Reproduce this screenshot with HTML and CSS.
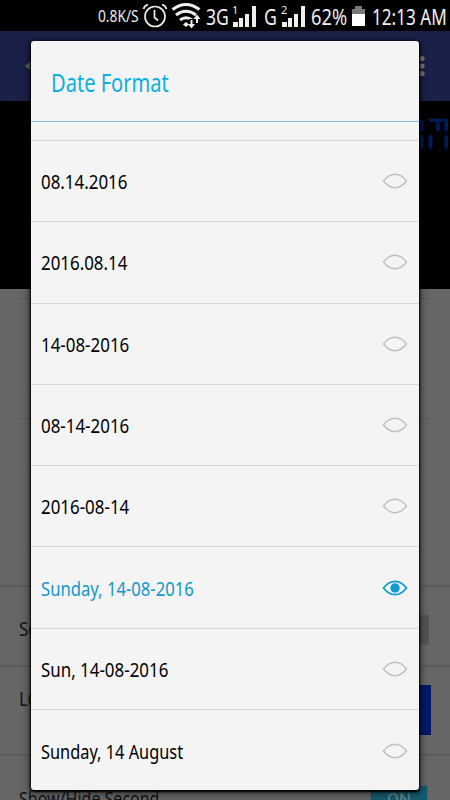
FILE: index.html
```html
<!DOCTYPE html>
<html lang="en">
<head>
<meta charset="utf-8">
<title>Date Format</title>
<link rel="stylesheet" href="styles.css">
</head>
<body>
<div class="screen">
  <header class="status">
    <span class="speed"><span class="t">0.8K/S</span></span>
    <svg class="alarm" width="26" height="27" viewBox="0 0 26 27" fill="none" stroke="#eee" stroke-width="1.7"><circle cx="13" cy="14.500" r="10"/><path d="M12.500 8v7.500l3.500 3M1.500 7q1-3.500 4.500-4.500M24.500 7q-1-3.500-4.500-4.500"/></svg>
    <svg class="wifi" width="30" height="27" viewBox="0 0 30 27" fill="none" stroke="#eee" stroke-width="3"><path d="M1.500 7.500Q15-2.500 28.500 7.500M5 13q10-7.500 20 0M9 18q6-4.500 12 0"/><path d="M12 22.500l3-2.500 3 2.500-3 2.500z" fill="#eee" stroke="none"/><path d="M20.500 17v8M26 22v-8" stroke="#000" stroke-width="5"/><path d="M20.500 18v5M26 16v5" stroke-width="2"/><path d="M17 22h7l-3.500 4.500zM22.500 17h7L26 12.500z" fill="#eee" stroke="none"/></svg>
    <span class="net g3"><span class="t">3G</span></span>
    <svg class="signal" width="26" height="26" viewBox="0 -2 26 26"><path d="M1 17h5v5H1zM7 13h4v9H7zM13 9h4v13h-4zM20 1h4v21h-4z" fill="#eee"/><text x="0" y="9">1</text></svg>
    <span class="net g1"><span class="t">G</span></span>
    <svg class="signal" width="26" height="26" viewBox="0 -2 26 26"><path d="M1 17h5v5H1zM7 13h4v9H7zM13 9h4v13h-4zM20 1h4v21h-4z" fill="#eee"/><text x="0" y="9">2</text></svg>
    <span class="net pct"><span class="t">62%</span></span>
    <svg class="battery" width="13" height="20" viewBox="0 0 13 20"><path d="M0 3h3V0h7v3h3v5H0z" fill="#777"/><path d="M0 8h13v12H0z" fill="#fff"/></svg>
    <span class="net clock"><span class="t">12:13 AM</span></span>
  </header>
  <div class="appbar">
    <svg width="12" height="14" viewBox="0 0 12 14"><path d="M0 7l7-6v12z" fill="#666"/></svg>
    <svg width="6" height="22" viewBox="0 0 6 22" fill="#777"><circle cx="3" cy="3.500" r="2.600"/><circle cx="3" cy="11" r="2.600"/><circle cx="3" cy="18.500" r="2.600"/></svg>
  </div>
  <div class="preview">
    <svg width="34" height="34" viewBox="0 0 34 34" fill="#001a5c"><path d="M5.500 1.500l2 1.500 1 2v8l-2 2.500-1.500-2zM5.500 18.500l1.500-1 1.500 2v10l-1.500 3.500-1.500-2zM15.500 17.500l2 2v10l-2 3.500-2-3v-10zM13.500 4l1-2.500h14l1 1-2.500 2.500h-10zM21 5.500h4v7l-2 3-2-3zM29.500 3l2-2 1.500 2v10l-1.500 2.500-2-2.500zM29.500 19.500l2-2 1.500 2v10l-1.500 3.500-2-3z"/></svg>
  </div>
  <main class="settings">
    <div class="blank first"></div>
    <div class="blank second"></div>
    <div class="setting seconds"><span class="t">Set Seconds</span><i class="off"></i></div>
    <div class="setting color"><span class="t">LCD Color</span><i class="swatch"></i></div>
    <div class="setting show"><span class="t">Show/Hide Second</span><span class="toggle"><span class="on">ON</span></span></div>
  </main>
  <section class="dialog">
    <h1><span class="t">Date Format</span></h1>
    <ul>
      <li class="stub"></li>
      <li><span class="t">08.14.2016</span><svg class="eye" viewBox="0 0 26 16"><path d="M1.500 8C5 3.500 9 1.300 13 1.300S21 3.500 24.500 8C21 12.500 17 14.700 13 14.700S5 12.500 1.500 8z"/></svg></li>
      <li><span class="t">2016.08.14</span><svg class="eye" viewBox="0 0 26 16"><path d="M1.500 8C5 3.500 9 1.300 13 1.300S21 3.500 24.500 8C21 12.500 17 14.700 13 14.700S5 12.500 1.500 8z"/></svg></li>
      <li><span class="t">14-08-2016</span><svg class="eye" viewBox="0 0 26 16"><path d="M1.500 8C5 3.500 9 1.300 13 1.300S21 3.500 24.500 8C21 12.500 17 14.700 13 14.700S5 12.500 1.500 8z"/></svg></li>
      <li><span class="t">08-14-2016</span><svg class="eye" viewBox="0 0 26 16"><path d="M1.500 8C5 3.500 9 1.300 13 1.300S21 3.500 24.500 8C21 12.500 17 14.700 13 14.700S5 12.500 1.500 8z"/></svg></li>
      <li><span class="t">2016-08-14</span><svg class="eye" viewBox="0 0 26 16"><path d="M1.500 8C5 3.500 9 1.300 13 1.300S21 3.500 24.500 8C21 12.500 17 14.700 13 14.700S5 12.500 1.500 8z"/></svg></li>
      <li class="selected"><span class="t">Sunday, 14-08-2016</span><svg class="eye" viewBox="0 0 26 16"><path d="M1.500 8C5 3.500 9 1.300 13 1.300S21 3.500 24.500 8C21 12.500 17 14.700 13 14.700S5 12.500 1.500 8z"/><circle cx="13" cy="8" r="4.700"/></svg></li>
      <li><span class="t">Sun, 14-08-2016</span><svg class="eye" viewBox="0 0 26 16"><path d="M1.500 8C5 3.500 9 1.300 13 1.300S21 3.500 24.500 8C21 12.500 17 14.700 13 14.700S5 12.500 1.500 8z"/></svg></li>
      <li class="long"><span class="t">Sunday, 14 August</span><svg class="eye" viewBox="0 0 26 16"><path d="M1.500 8C5 3.500 9 1.300 13 1.300S21 3.500 24.500 8C21 12.500 17 14.700 13 14.700S5 12.500 1.500 8z"/></svg></li>
    </ul>
  </section>
</div>
</body>
</html>
```
FILE: styles.css
```css
* { box-sizing: border-box; }
body { margin: 0; font-family: "Noto Sans", sans-serif; }
.screen { position: relative; width: 450px; height: 800px; overflow: hidden; background: #000; display: flex; flex-direction: column; }
.t { display: inline-block; white-space: nowrap; transform: scaleX(.845); transform-origin: 0 50%; }
.status { height: 31px; flex: none; display: flex; align-items: center; padding-left: 98px; color: #eee; }
.status > * { flex: none; }
.speed { width: 44px; font-size: 16px; padding-top: 1px; }
.speed .t { transform: scaleX(.86); }
.alarm { margin-right: 3px; }
.wifi { margin-right: 5px; }
.net { font-size: 21px; line-height: 30px; padding-top: 2px; }
.g3 { width: 26px; }
.g3 .t { transform: scaleX(.84); }
.g1 { width: 17px; margin-left: 6px; }
.pct { width: 41px; margin-left: 4px; }
.pct .t { transform: scaleX(.87); }
.clock { margin-left: 7px; }
.clock .t { transform: scaleX(.815); }
.signal text { font-size: 11px; fill: #eee; }
.appbar { height: 70px; flex: none; background: #1a2048; display: flex; justify-content: space-between; align-items: center; padding: 0 25px; }
.preview { height: 188px; flex: none; padding: 16px 1px 0; display: flex; justify-content: flex-end; align-items: flex-start; }
.settings { flex: 1; background: #666; font-size: 20px; color: #111; overflow: hidden; }
.blank { margin: 0 19px; border-top: 1px solid #595959; }
.first { margin-top: 9px; height: 120px; }
.second { height: 167px; }
.setting { display: flex; justify-content: space-between; align-items: flex-start; padding: 0 19px; border-top: 2px solid #5b5b5b; line-height: 28px; }
.seconds { height: 80px; padding-top: 28px; padding-right: 21px; }
.color { height: 89px; padding-top: 18px; }
.show { height: 80px; padding-top: 29px; }
.show .t { transform: scaleX(.8); }
.off { width: 60px; height: 30px; background: #555; }
.swatch { width: 60px; height: 50px; background: #001a66; }
.toggle { width: 58px; height: 30px; margin-right: 3px; background: #155b70; color: #71868d; text-align: center; font-family: Roboto, sans-serif; font-size: 17px; line-height: 26px; border: 1px solid #54656a; }
.toggle .on { display: block; }
.dialog { position: absolute; left: 31px; top: 41px; width: 388px; height: 749px; background: #f4f4f4; border-radius: 3px; box-shadow: 0 1px 2px 1px #000, 0 2px 8px 1px rgba(0,0,0,.6); overflow: hidden; }
h1 { margin: 0; height: 81px; padding-left: 20px; border-bottom: 1px solid #86bce0; font-size: 25px; font-weight: 400; line-height: 82px; color: #0cb0df; }
h1 .t { transform: scaleX(.803); }
ul { list-style: none; margin: 0; padding: 0; }
li { height: 81.3px; padding: 1px 11px 0 10px; display: flex; align-items: center; justify-content: space-between; border-bottom: 1px solid #d8d8d8; font-size: 20px; color: #000; }
li.stub { height: 19px; padding: 0; }
li:last-child { border: 0; }
.eye { width: 26px; height: 16px; margin-top: -1px; fill: none; stroke: #c0c0c0; stroke-width: 1.4; }
.selected { color: #1397cc; }
.selected .t { transform: scaleX(.832); }
.long .t { transform: scaleX(.817); }
.selected .eye { stroke: #0f9bd0; stroke-width: 1.8; }
.selected circle { fill: #0f9bd0; stroke: none; }
```
